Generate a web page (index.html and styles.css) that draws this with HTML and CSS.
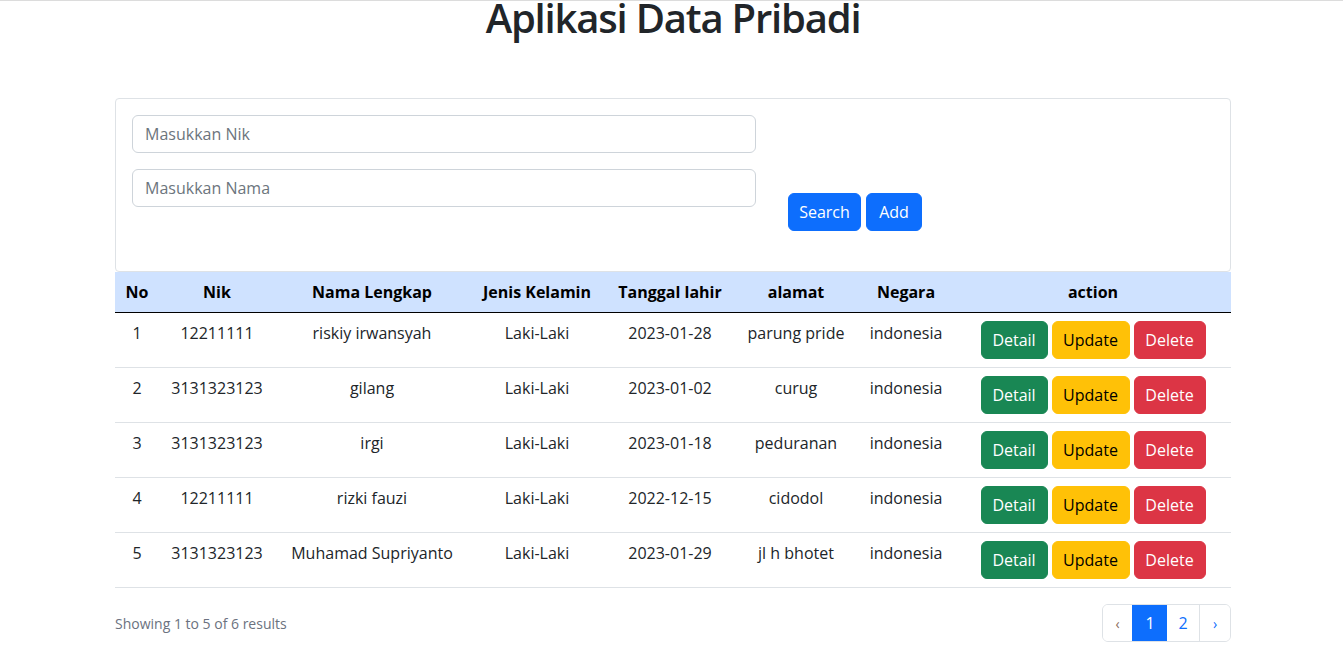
FILE: index.html
```html
<!DOCTYPE html>
<html lang="id">
<head>
<meta charset="utf-8">
<title>Aplikasi Data Pribadi</title>
<link rel="stylesheet" href="styles.css">
</head>
<body>
<div class="container">
  <h1 class="title">Aplikasi Data Pribadi</h1>

  <div class="card">
    <form class="search-form">
      <div class="inputs">
        <input class="form-control" type="text" placeholder="Masukkan Nik">
        <input class="form-control" type="text" placeholder="Masukkan Nama">
      </div>
      <div class="form-actions">
        <button type="button" class="btn btn-primary btn-search">Search</button>
        <button type="button" class="btn btn-primary btn-add">Add</button>
      </div>
    </form>
  </div>

  <table class="table">
    <colgroup>
      <col class="c-no"><col class="c-nik"><col class="c-nama"><col class="c-jk">
      <col class="c-tgl"><col class="c-alamat"><col class="c-negara"><col class="c-action">
    </colgroup>
    <thead>
      <tr>
        <th>No</th><th>Nik</th><th>Nama Lengkap</th><th>Jenis Kelamin</th>
        <th>Tanggal lahir</th><th>alamat</th><th>Negara</th><th>action</th>
      </tr>
    </thead>
    <tbody>
      <tr>
        <td>1</td><td>12211111</td><td>riskiy irwansyah</td><td>Laki-Laki</td>
        <td>2023-01-28</td><td>parung pride</td><td>indonesia</td>
        <td class="actions"><button class="btn btn-success b-detail">Detail</button><button class="btn btn-warning b-update">Update</button><button class="btn btn-danger b-delete">Delete</button></td>
      </tr>
      <tr>
        <td>2</td><td>3131323123</td><td>gilang</td><td>Laki-Laki</td>
        <td>2023-01-02</td><td>curug</td><td>indonesia</td>
        <td class="actions"><button class="btn btn-success b-detail">Detail</button><button class="btn btn-warning b-update">Update</button><button class="btn btn-danger b-delete">Delete</button></td>
      </tr>
      <tr>
        <td>3</td><td>3131323123</td><td>irgi</td><td>Laki-Laki</td>
        <td>2023-01-18</td><td>peduranan</td><td>indonesia</td>
        <td class="actions"><button class="btn btn-success b-detail">Detail</button><button class="btn btn-warning b-update">Update</button><button class="btn btn-danger b-delete">Delete</button></td>
      </tr>
      <tr>
        <td>4</td><td>12211111</td><td>rizki fauzi</td><td>Laki-Laki</td>
        <td>2022-12-15</td><td>cidodol</td><td>indonesia</td>
        <td class="actions"><button class="btn btn-success b-detail">Detail</button><button class="btn btn-warning b-update">Update</button><button class="btn btn-danger b-delete">Delete</button></td>
      </tr>
      <tr>
        <td>5</td><td>3131323123</td><td>Muhamad Supriyanto</td><td>Laki-Laki</td>
        <td>2023-01-29</td><td>jl h bhotet</td><td>indonesia</td>
        <td class="actions"><button class="btn btn-success b-detail">Detail</button><button class="btn btn-warning b-update">Update</button><button class="btn btn-danger b-delete">Delete</button></td>
      </tr>
    </tbody>
  </table>

  <div class="table-footer">
    <p class="results">Showing 1 to 5 of 6 results</p>
    <nav class="pagination">
      <span class="page-item prev disabled">&lsaquo;</span>
      <span class="page-item active">1</span>
      <a class="page-item p2" href="#">2</a>
      <a class="page-item next" href="#">&rsaquo;</a>
    </nav>
  </div>
</div>
</body>
</html>
```

FILE: styles.css
```css
* { box-sizing: border-box; }

html, body { margin: 0; padding: 0; }

body {
  font-family: "Open Sans", "Noto Sans", sans-serif;
  font-size: 16px;
  line-height: 1.5;
  color: #212529;
  background: #fff;
  border-top: 1px solid #dcdcdc;
}

.container {
  width: 1116px;
  margin: 0 0 0 115px;
}

.title {
  margin: 0 0 64px;
  text-align: center;
  font-size: 40px;
  font-weight: 600;
  line-height: 33px;
  letter-spacing: -1.2px;
  color: #212529;
}

.card {
  border: 1px solid #dee2e6;
  border-radius: 4px;
  padding: 16px;
  height: 174px;
}

.search-form {
  display: flex;
  align-items: flex-start;
}

.inputs {
  width: 624px;
  display: flex;
  flex-direction: column;
  gap: 16px;
}

.form-control {
  display: block;
  width: 100%;
  height: 38px;
  padding: 6px 12px;
  font-family: inherit;
  font-size: 16px;
  color: #212529;
  border: 1px solid #ced4da;
  border-radius: 6px;
  background: #fff;
}

.form-control::placeholder { color: #6c757d; }

.form-actions {
  display: flex;
  gap: 5px;
  margin-left: 32px;
  margin-top: 78px;
}

.btn {
  display: inline-flex;
  align-items: center;
  justify-content: center;
  height: 38px;
  padding: 0 12px;
  font-family: inherit;
  font-size: 16px;
  line-height: 1.5;
  border: 1px solid transparent;
  border-radius: 6px;
  cursor: pointer;
}

.btn-primary { background: #0d6efd; border-color: #0d6efd; color: #fff; }
.btn-success { background: #198754; border-color: #198754; color: #fff; }
.btn-warning { background: #ffc107; border-color: #ffc107; color: #000; }
.btn-danger  { background: #dc3545; border-color: #dc3545; color: #fff; }

.btn-search { width: 73px; }
.btn-add { width: 56px; }

.table {
  width: 100%;
  border-collapse: collapse;
  table-layout: fixed;
  margin: 0;
}

.c-no { width: 44px; }
.c-nik { width: 116px; }
.c-nama { width: 194px; }
.c-jk { width: 136px; }
.c-tgl { width: 130px; }
.c-alamat { width: 122px; }
.c-negara { width: 98px; }
.c-action { width: 276px; }

.table th,
.table td {
  padding: 8px 4px;
  text-align: center;
  vertical-align: top;
  font-size: 16px;
  line-height: 24px;
  white-space: nowrap;
}

.table thead th {
  background: #cfe2ff;
  color: #000;
  font-weight: 700;
  border-bottom: 1px solid #000;
}

.table tbody td {
  color: #212529;
  border-bottom: 1px solid #dee2e6;
}

.actions {
  font-size: 0;
}

.actions .btn { margin: 0 2px; }

.b-detail { width: 67px; }
.b-update { width: 78px; }
.b-delete { width: 72px; }

.table-footer {
  display: flex;
  justify-content: space-between;
  align-items: center;
  margin-top: 16px;
}

.results {
  margin: 0;
  font-size: 14px;
  color: #6b7280;
}

.pagination {
  display: flex;
  border: 1px solid #dee2e6;
  border-radius: 6px;
  overflow: hidden;
  height: 38px;
}

.page-item {
  display: flex;
  align-items: center;
  justify-content: center;
  height: 100%;
  font-size: 16px;
  color: #0d6efd;
  text-decoration: none;
  background: #fff;
}

.page-item + .page-item { border-left: 1px solid #dee2e6; }

.prev { width: 29px; color: #8a6d5a; font-size: 14px; }
.page-item.active { width: 35px; background: #0d6efd; color: #fff; border-left-color: #0d6efd; }
.p2 { width: 32px; border-left: none !important; }
.next { width: 31px; font-size: 14px; }
```
